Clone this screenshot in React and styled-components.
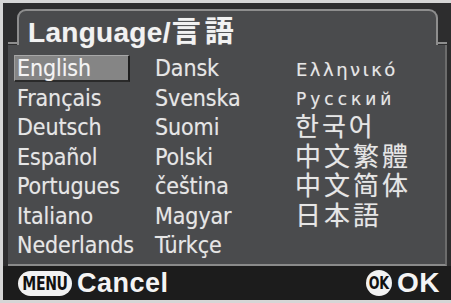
import React from "react";
import styled, { createGlobalStyle } from "styled-components";

const GlobalStyle = createGlobalStyle`
  html, body { margin: 0; padding: 0; background: #d8d8d8; }
  * { box-sizing: border-box; }
`;

const NARROW = `"DejaVu Sans Condensed", "Liberation Sans", sans-serif`;

const Frame = styled.div`
  width: 451px;
  height: 303px;
  padding: 3px 0 3px 3px;
  background: #d6d6d6;
`;

const Screen = styled.div`
  height: 100%;
  background: #2d2d2e;
  display: flex;
  flex-direction: column;
`;

const Header = styled.div`
  height: 42px;
  margin: 0 4px 0 5px;
  padding-top: 6px;
  display: flex;
  align-items: stretch;
  position: relative;
  z-index: 1;
`;

const Stub = styled.div`
  width: 9px;
  align-self: flex-end;
  margin-bottom: 1px;
  border-bottom: 2px solid #8e8e8e;
`;

const Tab = styled.div`
  flex: 1;
  border: 2px solid #8e8e8e;
  border-bottom: none;
  border-radius: 9px 9px 0 0;
  background: #4a4b4d;
  padding-left: 9px;
  display: flex;
  align-items: flex-end;
`;

const Title = styled.div`
  font-family: "Liberation Sans", Arial, sans-serif;
  font-weight: 700;
  font-size: 28px;
  line-height: 1;
  color: #f2f2f2;
  letter-spacing: 0.3px;
  white-space: nowrap;
  margin-bottom: -2px;
  text-shadow: 0 0 1px rgba(255, 255, 255, 0.35);
`;

const TitleCJK = styled.span`
  font-family: "Liberation Sans", "Noto Sans CJK JP", "Noto Sans CJK SC", sans-serif;
  font-weight: 700;
  font-size: 29px;
  letter-spacing: 4px;
  margin-left: 1px;
`;

const Body = styled.div`
  flex: 1;
  margin: 0 4px 0 5px;
  background: #4a4b4d;
  border-right: 2px solid #6c6c6c;
  border-bottom: 2px solid #8a8a8a;
  padding: 10px 0 0 6px;
  display: grid;
  grid-template-columns: 138px 140px 1fr;
  grid-template-rows: repeat(7, 29.5px);
  grid-auto-flow: column;
`;

const Item = styled.div`
  font-family: ${NARROW};
  font-size: 23px;
  line-height: 27px;
  height: 27px;
  letter-spacing: -0.1px;
  color: #e6e6e6;
  padding-left: 3px;
  white-space: nowrap;
  text-shadow: 0 0 1px rgba(255, 255, 255, 0.3);
  ${(p) =>
    p.$selected &&
    `
    width: 116px;
    background: #858585;
    color: #f4f4f4;
    border-top: 1px solid #a8a8a8;
    border-left: 1px solid #a0a0a0;
    border-right: 2px solid #1f1f1f;
    border-bottom: 2px solid #2a2a2a;
    line-height: 24px;
    padding-left: 2px;
  `}
`;

const SmallItem = styled(Item)`
  font-family: "DejaVu Sans", sans-serif;
  font-size: ${(p) => p.$size || 17}px;
  letter-spacing: ${(p) => p.$spacing || 2}px;
  line-height: 29px;
  padding-left: 4px;
`;

const CjkItem = styled(Item)`
  font-family: "Liberation Sans", ${(p) => p.$family}, sans-serif;
  font-size: 26px;
  line-height: 27px;
  letter-spacing: 3px;
  padding-left: 3px;
`;

const Footer = styled.div`
  height: 34px;
  background: #1c1c1c;
  display: flex;
  align-items: center;
  padding: 0 11px 0 15px;
`;

const Pill = styled.div`
  flex: none;
  width: ${(p) => (p.$round ? 26 : 54)}px;
  height: ${(p) => (p.$round ? 26 : 25)}px;
  border-radius: 13px;
  background: #f2f2f2;
  display: flex;
  align-items: center;
  justify-content: center;
  overflow: visible;
`;

const PillText = styled.span`
  display: inline-block;
  color: #111;
  font-family: ${NARROW};
  font-weight: 700;
  font-size: ${(p) => (p.$round ? 18 : 20)}px;
  letter-spacing: -0.5px;
  line-height: 1;
  white-space: nowrap;
  transform: scaleX(0.78);
`;

const FooterLabel = styled.div`
  font-family: "Liberation Sans", Arial, sans-serif;
  font-weight: 700;
  font-size: ${(p) => p.$size || 27}px;
  color: #f4f4f4;
  letter-spacing: 0.5px;
  margin-left: 5px;
  line-height: 1;
`;

const Spacer = styled.div`
  flex: 1;
`;

const col1 = ["English", "Français", "Deutsch", "Español", "Portugues", "Italiano", "Nederlands"];
const col2 = ["Dansk", "Svenska", "Suomi", "Polski", "čeština", "Magyar", "Türkçe"];

export default function App() {
  return (
    <>
      <GlobalStyle />
      <Frame>
        <Screen>
          <Header>
            <Stub />
            <Tab>
              <Title>
                Language/<TitleCJK>言語</TitleCJK>
              </Title>
            </Tab>
            <Stub />
          </Header>
          <Body>
            {col1.map((l, i) => (
              <Item key={l} $selected={i === 0}>
                {l}
              </Item>
            ))}
            {col2.map((l) => (
              <Item key={l}>{l}</Item>
            ))}
            <SmallItem $size={18} $spacing={2.5}>Ελληνικό</SmallItem>
            <SmallItem $size={17} $spacing={4}>Русский</SmallItem>
            <CjkItem $family={`"Noto Sans CJK KR"`}>한국어</CjkItem>
            <CjkItem $family={`"Noto Sans CJK TC"`}>中文繁體</CjkItem>
            <CjkItem $family={`"Noto Sans CJK SC"`}>中文简体</CjkItem>
            <CjkItem $family={`"Noto Sans CJK JP"`}>日本語</CjkItem>
          </Body>
          <Footer>
            <Pill>
              <PillText>MENU</PillText>
            </Pill>
            <FooterLabel>Cancel</FooterLabel>
            <Spacer />
            <Pill $round>
              <PillText $round>OK</PillText>
            </Pill>
            <FooterLabel $size={28}>OK</FooterLabel>
          </Footer>
        </Screen>
      </Frame>
    </>
  );
}
